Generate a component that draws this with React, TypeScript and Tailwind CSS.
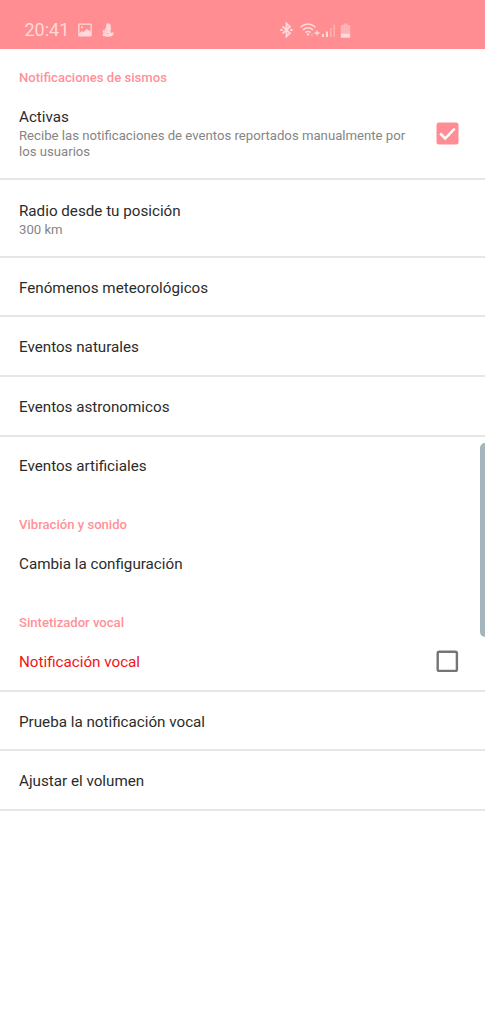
import type { ReactNode } from "react";

function StatusBar() {
  return (
    <header className="flex h-[49px] shrink-0 items-center bg-[#ff8d92] pl-[24.5px] pt-[11px] text-[#ffd9d9]">
      <span className="w-[44px] whitespace-nowrap text-[18px] leading-[20px]">20:41</span>
      <svg className="ml-[9.500px] h-[14px] w-[14px]" viewBox="0 0 14 14">
        <path
          fillRule="evenodd"
          fill="currentColor"
          d="M1.2 0.5h11.6q1 0 1 1v11q0 1-1 1H1.2q-1 0-1-1v-11q0-1 1-1zM1.5 1.800v8.400l2.300-2.200 1.800 1 3.200-3 3.700 2.500V1.800zM4 3.200a1.100 1.100 0 1 1 0 2.200 1.100 1.100 0 0 1 0-2.200z"
        />
      </svg>
      <svg className="ml-[10px] h-[14px] w-[12px]" viewBox="0 0 12 14" fill="currentColor">
        <circle cx="6.300" cy="2.500" r="2.300" />
        <path d="M4.800 3.500L8.900 3.300 8.900 6.500 8.300 8.500 9.200 10 11.500 9.200C12.100 11.500 10.700 13.200 8.200 13.500 5.500 13.900 1.500 13.700.6 12.300.2 11.400.9 10.700 1.700 10.500L.7 8.500C.5 7.400 1.500 6.800 2.400 7.400L3.400 5.300z" />
        <path d="M2.200 9l3 1.800 1.800-.5M3.500 7l1.800 1" fill="none" stroke="#ff8d92" strokeWidth=".5" />
      </svg>
      <svg className="ml-[166px] h-[16px] w-[13px]" viewBox="0 0 13 16" fill="none" stroke="currentColor" strokeWidth="1.800">
        <path d="M2.500 4.300l7.500 7L6.500 14.400V1.600l3.500 3.100L2.500 11.700" />
        <path d="M.3 8h2.400M10.200 8h2.400" strokeWidth="1.900" />
      </svg>
      <svg className="ml-[6.500px] h-[16px] w-[20px]" viewBox="0 0 20 16" fill="none" stroke="currentColor" strokeWidth="1.500">
        <path d="M.6 5.100q7.400-6.200 14.800 0M3 7.900q5-4.200 10 0M5.300 10.500q2.700-2.100 5.400 0" />
        <path d="M8 11l-1.500 1.300L8 14l1.500-1.700z" fill="currentColor" stroke="none" />
        <path d="M17 8.500v5M14.500 11h5" strokeWidth="1.300" />
        <path d="M12 11.500v2.500" strokeWidth="1" opacity=".6" />
      </svg>
      <svg className="ml-[2px] h-[16px] w-[14px]" viewBox="0 0 14 16" fill="currentColor">
        <path d="M0 12h2v3H0zM4 9.500h2V15H4z" />
        <path d="M8 6h1.600v9H8zM11.500 2.500H13V15h-1.500z" opacity=".45" />
      </svg>
      <svg className="ml-[4px] h-[15px] w-[11px]" viewBox="0 0 11 15" fill="currentColor">
        <path d="M3.500 0.500h4V2h1.700q1 0 1 1v7.500H.8V3q0-1 1-1h1.700z" opacity=".5" />
        <path d="M.8 10.500h9.400V14q0 .8-.8.8H1.600q-.8 0-.8-.8z" />
      </svg>
    </header>
  );
}

function Category({ children }: { children: ReactNode }) {
  return (
    <h2 className="h-[38.200px] pl-[19px] pt-[19px] text-[13.100px] font-medium leading-[19px] text-[#ff9298]">
      {children}
    </h2>
  );
}

function Checkbox({ checked = false }: { checked?: boolean }) {
  return (
    <svg className="mr-[26.500px] mt-[1px] h-[23px] w-[23px] shrink-0" viewBox="0 0 23 23" fill="none" role="checkbox" aria-checked={checked}>
      {checked ? (
        <>
          <rect x=".5" y=".5" width="22" height="22" rx="2.500" fill="#ff8d95" />
          <path d="M4.200 11.500l5 5L18.700 6.700" stroke="#fff" strokeWidth="2.500" />
        </>
      ) : (
        <rect x="1.700" y="1.700" width="19.200" height="19.200" rx="1.500" stroke="#757575" strokeWidth="2.400" />
      )}
    </svg>
  );
}

type RowProps = {
  title: string;
  summary?: string;
  size?: string;
  divider?: boolean;
  color?: string;
  control?: ReactNode;
};

function Row({ title, summary, size = "h-[59.700px]", divider = true, color = "text-[#2b2b2b]", control }: RowProps) {
  return (
    <div className={`flex items-center justify-between pl-[19px] ${size} ${divider ? "border-b-2 border-[#e6e6e6]" : ""}`}>
      <div className={`w-[395px] ${divider ? "pt-[2px]" : ""}`}>
        <div className={`text-[15.200px] leading-[20px] ${color}`}>{title}</div>
        {summary && <div className="pt-px text-[13.170px] leading-[16px] text-[#858585]">{summary}</div>}
      </div>
      {control}
    </div>
  );
}

export default function App() {
  return (
    <div className="relative flex h-[1024px] w-[485px] flex-col overflow-hidden bg-white font-['Roboto',sans-serif]">
      <StatusBar />
      <main>
        <Category>Notificaciones de sismos</Category>
        <Row
          size="h-[93.300px]"
          title="Activas"
          summary="Recibe las notificaciones de eventos reportados manualmente por los usuarios"
          control={<Checkbox checked />}
        />
        <Row size="h-[77.300px]" title="Radio desde tu posición" summary="300 km" />
        <Row title="Fenómenos meteorológicos" />
        <Row title="Eventos naturales" />
        <Row title="Eventos astronomicos" />
        <Row title="Eventos artificiales" divider={false} size="h-[59.200px]" />
        <Category>Vibración y sonido</Category>
        <Row title="Cambia la configuración" divider={false} />
        <Category>Sintetizador vocal</Category>
        <Row title="Notificación vocal" color="text-[#f01418]" control={<Checkbox />} />
        <Row title="Prueba la notificación vocal" />
        <Row title="Ajustar el volumen" />
      </main>
      <div className="absolute right-0 top-[443px] h-[194px] w-[5px] rounded-l-[5px] bg-[#a5b5bc]" />
    </div>
  );
}
